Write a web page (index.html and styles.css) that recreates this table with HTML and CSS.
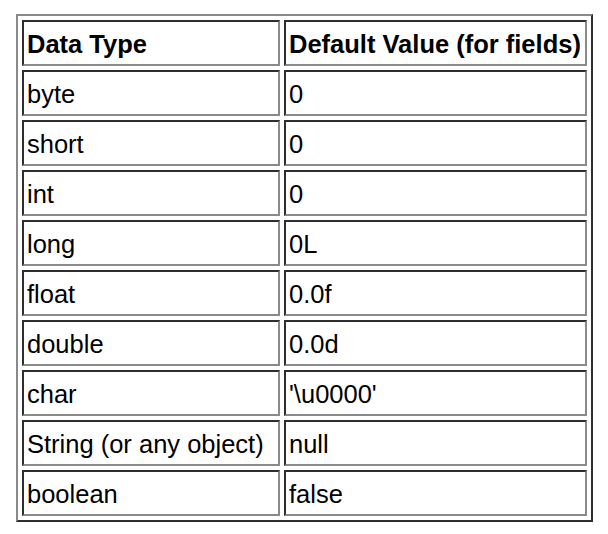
FILE: index.html
```html
<!DOCTYPE html>
<html>
<head>
<meta charset="utf-8">
<link rel="stylesheet" href="styles.css">
</head>
<body>
<table class="types">
  <tr><th class="c1">Data Type</th><th class="c2">Default Value (for fields)</th></tr>
  <tr><td>byte</td><td>0</td></tr>
  <tr><td>short</td><td>0</td></tr>
  <tr><td>int</td><td>0</td></tr>
  <tr><td>long</td><td>0L</td></tr>
  <tr><td>float</td><td>0.0f</td></tr>
  <tr><td>double</td><td>0.0d</td></tr>
  <tr><td>char</td><td>'\u0000'</td></tr>
  <tr><td>String (or any object)</td><td>null</td></tr>
  <tr><td>boolean</td><td>false</td></tr>
</table>
</body>
</html>
```
FILE: styles.css
```css
html, body {
  margin: 0;
  background: #ffffff;
}
body {
  padding: 14px 0 0 16px;
  font-family: "Liberation Sans", Arial, Helvetica, sans-serif;
  color: #000;
}
.types {
  border-collapse: separate;
  border-spacing: 4px;
  border-style: solid;
  border-width: 2px;
  border-color: #8a8a8a #2e2e2e #2e2e2e #8a8a8a;
  table-layout: fixed;
  width: 577px;
}
.types th,
.types td {
  box-sizing: border-box;
  height: 46px;
  padding: 2px 2px 0 3px;
  border-style: solid;
  border-width: 2px;
  border-color: #2e2e2e #8a8a8a #8a8a8a #2e2e2e;
  font-size: 25.5px;
  text-align: left;
  vertical-align: middle;
  white-space: nowrap;
}
.types th {
  font-weight: bold;
}
.types td {
  font-weight: normal;
}
.c1 {
  width: 258px;
}
.c2 {
  width: 303px;
}
```
